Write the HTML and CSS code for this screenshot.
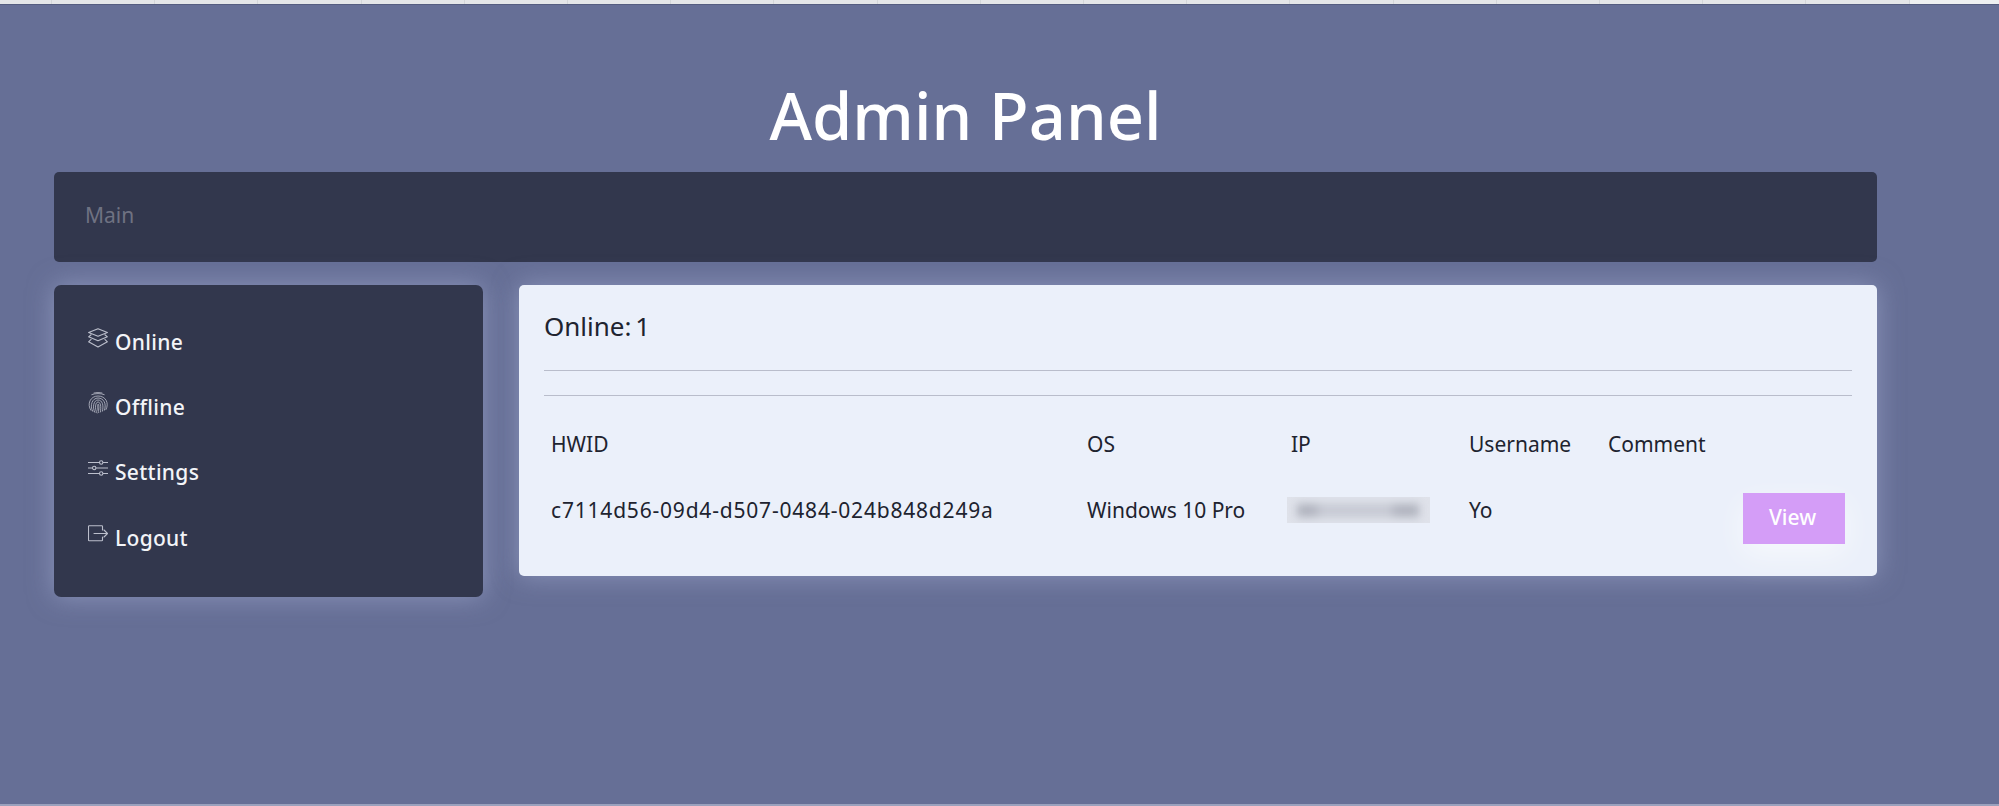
FILE: index.html
```html
<!DOCTYPE html>
<html lang="en">
<head>
<meta charset="utf-8">
<title>Admin Panel</title>
<link rel="stylesheet" href="styles.css">
</head>
<body>
<div class="topstrip"><div class="cells"></div></div>
<div class="page">
  <h1 class="title">Admin Panel</h1>
  <div class="mainbar">Main</div>
  <div class="columns">
    <nav class="sidebar">
      <a class="navitem">
        <svg class="icon" viewBox="0 0 20 20" fill="none" stroke="currentColor" stroke-width="1.1" stroke-linejoin="round">
          <path d="M10 .7 19.400 4.500 10 8.300.6 4.500Z"/>
          <path d="M3.400 6.500.6 8.800 10 12.800 19.400 8.800 16.600 6.500"/>
          <path d="M3.400 11.200.6 13.800 10 19 19.400 13.800 16.600 11.200"/>
        </svg>
        <span>Online</span>
      </a>
      <a class="navitem">
        <svg class="icon icon-tall" viewBox="0 0 20 22" fill="none" stroke="currentColor" stroke-width=".8" stroke-linecap="round">
          <path d="M6 1C8.500.4 11.500.4 14 1"/>
          <path d="M3.800 2.600C7.500 1.200 12.500 1.200 16.200 2.600"/>
          <path d="M2.900 18.300C-1.500 12 2.500 4 10 4c7.500 0 11.500 7 8 13.500"/>
          <path d="M4.800 19.400C1.200 13.500 4.400 6 10 6c5.800 0 8.800 6 6.400 12.200"/>
          <path d="M6.900 20.400C3.800 15 6 8 10 8c4.200 0 6 5.200 4.400 11.200"/>
          <path d="M9 21C6.300 16.500 7.500 10 10 10c2.500 0 3.400 4.500 2.400 10"/>
          <path d="M10.600 20.500C9.500 17 9.400 12.200 10.100 12.200c1 0 .9 4.500.6 6"/>
        </svg>
        <span>Offline</span>
      </a>
      <a class="navitem">
        <svg class="icon" viewBox="0 0 20 20" fill="none" stroke="currentColor" stroke-width="1.1">
          <path d="M0 4.500H11.500M15 4.500H20M0 10H4.500M8 10H20M0 15.500H11.500M15 15.500H20"/>
          <circle cx="13.200" cy="4.500" r="1.700"/>
          <circle cx="6.200" cy="10" r="1.700"/>
          <circle cx="13.200" cy="15.500" r="1.700"/>
        </svg>
        <span>Settings</span>
      </a>
      <a class="navitem">
        <svg class="icon" viewBox="0 0 20 20" fill="none" stroke="currentColor" stroke-width="1.1" stroke-linecap="round" stroke-linejoin="round">
          <path d="M14.500 6V2.500Q14.500 1.800 13.800 1.800H1.200Q.5 1.800 .5 2.500V16.100Q.5 16.800 1.200 16.800H13.800Q14.500 16.800 14.500 16.100V13"/>
          <path d="M6 9.500H19.500M16 6 19.500 9.500 16 13"/>
        </svg>
        <span>Logout</span>
      </a>
    </nav>
    <section class="card">
      <h2 class="count">Online: 1</h2>
      <hr class="rule rule-first">
      <hr class="rule rule-second">
      <table class="clients">
        <colgroup>
          <col class="col-hwid"><col class="col-os"><col class="col-ip"><col class="col-user"><col class="col-comment"><col>
        </colgroup>
        <thead>
          <tr><th>HWID</th><th>OS</th><th>IP</th><th>Username</th><th>Comment</th><th></th></tr>
        </thead>
        <tbody>
          <tr>
            <td class="hwid">c7114d56-09d4-d507-0484-024b848d249a</td>
            <td>Windows 10 Pro</td>
            <td><div class="redacted"><div class="redacted-ink"></div></div></td>
            <td>Yo</td>
            <td></td>
            <td class="action"><button class="view" type="button">View</button></td>
          </tr>
        </tbody>
      </table>
    </section>
  </div>
</div>
<div class="bottomline"></div>
</body>
</html>
```
FILE: styles.css
```css
* { box-sizing: border-box; }
html, body { margin: 0; height: 100%; }
body {
  position: relative;
  background: #666f96;
  color: #fff;
  font-family: "Noto Sans", "Open Sans", sans-serif;
  overflow: hidden;
}
.topstrip {
  height: 5px;
  background: #eef0f1;
  border-bottom: 1px solid #555d80;
}
.cells {
  width: 1910px;
  height: 4px;
  background: repeating-linear-gradient(90deg, #d4d7d9 0 1px, #e4e6e8 1px 103.2px);
  background-position: 51px 0;
}
.page {
  width: 1877px;
  padding-left: 54px;
}
.title {
  margin: 0;
  height: 167px;
  padding: 70px 0 0 0;
  font-size: 65px;
  line-height: 80px;
  font-weight: 500;
  text-align: center;
  color: #fff;
}
.mainbar {
  height: 90px;
  padding: 0 0 4px 31px;
  display: flex;
  align-items: center;
  background: #32374d;
  border-radius: 5px;
  color: #6f7282;
  font-size: 21px;
}
.columns {
  display: flex;
  align-items: flex-start;
  gap: 36px;
  margin-top: 23px;
}
.sidebar {
  width: 429px;
  height: 312px;
  padding: 24px 0 0 34px;
  background: #32374d;
  border-radius: 7px;
  box-shadow: 0 0 26px rgba(170, 178, 215, .55);
}
.navitem {
  display: flex;
  align-items: center;
  gap: 7px;
  height: 65.4px;
  color: #f3f4f8;
  font-size: 21px;
  font-weight: 500;
  letter-spacing: .3px;
}
.icon {
  width: 20px;
  height: 20px;
  margin-bottom: 8px;
  color: #bcbfcc;
  flex: none;
}
.icon-tall { height: 22px; }
.card {
  width: 1358px;
  height: 291px;
  padding: 21px 25px 0;
  background: #ebf0fa;
  border-radius: 5px;
  box-shadow: 0 0 26px rgba(170, 178, 215, .55);
  color: #20232f;
}
.count {
  margin: 0;
  font-size: 26px;
  line-height: 40px;
  font-weight: 400;
  word-spacing: -3px;
}
.rule {
  margin: 0;
  border: 0;
  height: 1px;
  background: #b9bdcb;
}
.rule-first { margin-top: 24px; }
.rule-second { margin-top: 24px; }
.clients {
  width: 100%;
  table-layout: fixed;
  border-collapse: collapse;
  margin-top: 16px;
  font-size: 21px;
  line-height: 34px;
}
.col-hwid { width: 536px; }
.col-os { width: 204px; }
.col-ip { width: 178px; }
.col-user { width: 139px; }
.col-comment { width: 130px; }
th {
  padding: 15px 7px 20px;
  text-align: left;
  font-weight: 400;
}
td {
  padding: 12px 7px;
  vertical-align: top;
}
.hwid { letter-spacing: .8px; }
.action { text-align: right; }
.redacted {
  width: 143px;
  height: 26px;
  margin: 4px 0 0 -4px;
  background: #dfe2ea;
  overflow: hidden;
}
.redacted-ink {
  width: 122px;
  height: 13px;
  margin: 7px 0 0 10px;
  background: linear-gradient(90deg, #b0b3be 0 14%, #c6c9d3 20% 75%, #b0b3be 82% 100%);
  filter: blur(4px);
}
.view {
  width: 102px;
  height: 51px;
  padding: 0 3px 4px 0;
  border: 0;
  background: #d49df7;
  color: #fff;
  font: inherit;
  font-weight: 500;
  box-shadow: 0 10px 30px rgba(255, 255, 255, .6);
}
.bottomline {
  position: absolute;
  left: 0;
  right: 0;
  bottom: 0;
  height: 2px;
  background: #9aa1bd;
}
```
